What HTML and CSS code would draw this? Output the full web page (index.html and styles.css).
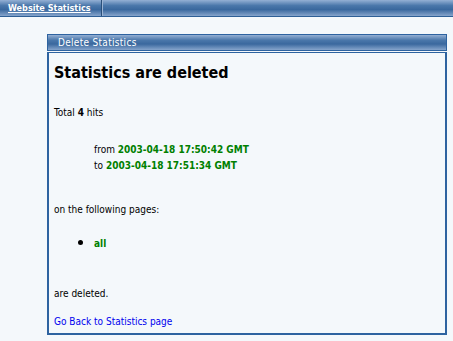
FILE: index.html
```html
<!DOCTYPE html>
<html lang="en">
<head>
    <meta charset="UTF-8">
    <title>Website Statistics</title>
    <link rel="stylesheet" href="styles.css">
</head>
<body>
<div class="topbar">
    <a class="tab" href="#">Website Statistics</a>
</div>
<div class="panel">
    <div class="panel-head">Delete Statistics</div>
    <div class="panel-body">
        <h1>Statistics are deleted</h1>
        <p class="total">Total <b>4</b> hits</p>
        <div class="range">
            <p>from <b class="val">2003-04-18 17:50:42 GMT</b></p>
            <p>to <b class="val">2003-04-18 17:51:34 GMT</b></p>
        </div>
        <p class="pages">on the following pages:</p>
        <ul>
            <li><b class="val">all</b></li>
        </ul>
        <p class="done">are deleted.</p>
        <a class="back" href="#">Go Back to Statistics page</a>
    </div>
</div>
</body>
</html>
```

FILE: styles.css
```css
body {
    margin: 0;
    background: #f4f8fb;
    font-family: "DejaVu Sans Condensed", "DejaVu Sans", Verdana, sans-serif;
    font-size: 10px;
    color: #000;
}
.topbar {
    height: 16px;
    border-bottom: 1px solid #2e5f96;
    background: linear-gradient(#94b0d4, #4a77aa 35%, #3a689e 60%, #86a5cc);
    display: flex;
}
.tab {
    color: #fff;
    font-weight: bold;
    font-size: 9px;
    line-height: 16px;
    padding: 0 10px 0 8px;
    border-right: 1px solid #2a4f7a;
    box-shadow: 1px 0 0 #9bb4d4;
}
.panel {
    margin: 17px 6px 0 47px;
}
.panel-head {
    height: 15px;
    border: 1px solid #2e63a0;
    background: linear-gradient(#94b0d4, #4a77aa 35%, #3a689e 60%, #86a5cc);
    color: #fff;
    font-size: 10px;
    letter-spacing: 0.3px;
    line-height: 15px;
    padding-left: 10px;
}
.panel-body {
    margin-top: 1px;
    border: 2px solid #2e63a0;
    border-width: 1px 2px 2px 2px;
    height: 280px;
    padding: 0 0 0 5px;
}
h1 {
    font-size: 16px;
    margin: 10px 0 0;
    line-height: 20px;
}
p {
    margin: 0;
    line-height: 16px;
}
.total {
    margin-top: 22px;
}
.range {
    margin: 21px 0 0 40px;
}
.val {
    color: #008000;
}
.pages {
    margin-top: 28px;
}
ul {
    margin: 16px 0 0;
    padding-left: 40px;
}
li {
    line-height: 16px;
}
li::marker {
    font-size: 15px;
}
.done {
    margin-top: 34px;
}
.back {
    display: block;
    margin-top: 14px;
    color: #0000ee;
    text-decoration: none;
}
```
